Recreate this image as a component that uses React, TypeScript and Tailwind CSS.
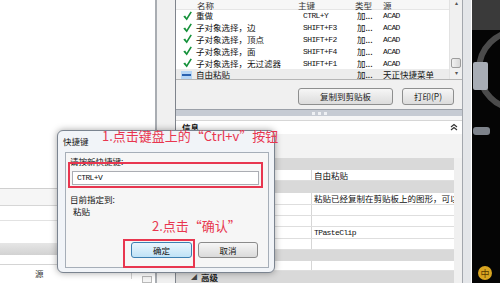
import React from "react"

const cjk = "font-['Noto_Sans_CJK_SC',sans-serif]"
const mono = "font-['Liberation_Mono',monospace] text-[8px] tracking-[-0.6px]"

const shortcuts = [
  { name: "重做", key: "CTRL+Y", type: "加...", src: "ACAD", icon: "check" },
  { name: "子对象选择，边", key: "SHIFT+F3", type: "加...", src: "ACAD", icon: "check" },
  { name: "子对象选择，顶点", key: "SHIFT+F2", type: "加...", src: "ACAD", icon: "check" },
  { name: "子对象选择，面", key: "SHIFT+F4", type: "加...", src: "ACAD", icon: "check" },
  { name: "子对象选择，无过滤器", key: "SHIFT+F1", type: "加...", src: "ACAD", icon: "check" },
  { name: "自由粘贴", key: "", type: "加...", src: "天正快捷菜单", icon: "minus" },
]

// info table rows: kind "cat" = gray category band
const infoRows = [
  { kind: "cat", h: "h-[12px]", value: "" },
  { kind: "row", h: "h-[11px]", value: "自由粘贴" },
  { kind: "cat", h: "h-[12px]", value: "" },
  { kind: "row", h: "h-[12px]", value: "粘贴已经复制在剪贴板上的图形，可以让用户自由选择粘贴方式" },
  { kind: "row", h: "h-[11px]", value: "" },
  { kind: "row", h: "h-[11px]", value: "" },
  { kind: "mono", h: "h-[12px]", value: "TPasteClip" },
  { kind: "row", h: "h-[11px]", value: "" },
  { kind: "cat", h: "h-[11px]", value: "" },
  { kind: "row", h: "h-[10px]", value: "" },
]

function CheckIcon() {
  return (
    <svg width="9" height="10" viewBox="0 0 9 10">
      <path d="M0.3 5.6 L2.1 4.4 L3.6 6.7 L7.5 0.4 L8.9 1.3 L3.8 9.6 Z" fill="#15913a" />
    </svg>
  )
}

function MinusIcon() {
  return (
    <div className="flex h-[8px] w-[11px] items-center justify-center bg-[#b6d5f4]">
      <div className="h-[2px] w-[9px] bg-[#2b62b0]" />
    </div>
  )
}

function WinButton({ label, className }: { label: string; className: string }) {
  return (
    <div
      className={`flex items-center justify-center rounded-[3px] border border-[#8e8f8f] bg-gradient-to-b from-[#f6f6f6] to-[#dcdcdc] text-[8.5px] text-[#222] ${cjk} ${className}`}
    >
      {label}
    </div>
  )
}

function LeftPanel() {
  return (
    <div className={`flex w-[155px] shrink-0 flex-col bg-white text-[8.5px] ${cjk}`}>
      <div className="h-[188px]" />
      <div className="h-[17px] border-t border-[#cfcfcf] bg-[#f6f6f6]" />
      <div className="h-[15px] border-t border-[#d6d6d6]" />
      <div className="h-[23px] border-t border-[#e2e2e2]" />
      <div className="h-[12px] bg-gradient-to-b from-[#e6e6e6] to-[#d2d2d2]" />
      <div className="h-[10px] border-b border-[#d4d4d4]" />
      <div className="flex h-[18px] items-start">
        <div className="w-[132px] border-r border-[#d0d0d0] pl-[35px] pt-[2px] leading-[12px] text-[#333]">源</div>
        <div className="ml-[10px] mt-[11px] h-[7px] w-[10px] border border-[#b9b9b9] bg-[#f4f4f4]" />
      </div>
    </div>
  )
}

function ShortcutList() {
  return (
    <div className="flex h-[80px] border-b border-[#b5b5b5]">
      <div className={`w-[273px] overflow-hidden bg-white text-[8.5px] text-[#111] ${cjk}`}>
        <div className="flex h-[10px] items-center border-b border-[#e6e6e6] bg-[#f7f7f7] leading-[10px] text-[#333]">
          <div className="w-[120px] pl-[21px]">名称</div>
          <div className="w-[57px] pl-[2px]">主键</div>
          <div className="w-[28px] pl-[2px]">类型</div>
          <div className="pl-[2px]">源</div>
        </div>
        {shortcuts.map((r) => (
          <div
            key={r.name}
            className={`flex h-[11.8px] items-center whitespace-nowrap leading-[11px] ${r.icon === "minus" ? "bg-[#ececec]" : ""}`}
          >
            <div className={`flex w-[20px] ${r.icon === "minus" ? "pl-[5px]" : "pl-[7px]"}`}>
              {r.icon === "check" ? <CheckIcon /> : <MinusIcon />}
            </div>
            <div className="w-[100px]">{r.name}</div>
            <div className={`w-[57px] pl-[7px] ${mono}`}>{r.key}</div>
            <div className="w-[28px] pl-[4px]">{r.type}</div>
            <div className={r.src === "ACAD" ? `pl-[2px] ${mono}` : "pl-[2px]"}>{r.src}</div>
          </div>
        ))}
      </div>
      {/* scrollbar */}
      <div className="relative w-[13px] border-l border-[#e2e2e2] bg-[#f0f0f0]">
        <div className="pt-[0px] text-center text-[6px] leading-[6px] text-[#555]">▴</div>
        <div className="absolute left-[1px] top-[58px] h-[10px] w-[10px] rounded-[2px] border border-[#9d9d9d] bg-gradient-to-r from-[#f2f2f2] to-[#d8d8d8]" />
        <div className="absolute bottom-[3px] left-0 w-full text-center text-[6px] leading-[6px] text-[#555]">▾</div>
      </div>
    </div>
  )
}

function InfoTable() {
  return (
    <div className="flex flex-1">
      <div className={`w-[278px] overflow-hidden bg-white text-[8.5px] text-[#111] ${cjk}`}>
        {infoRows.map((r, i) =>
          r.kind === "cat" ? (
            <div key={i} className={`${r.h} bg-[#d9d9d9]`} />
          ) : (
            <div key={i} className={`flex ${r.h} border-b border-[#dedede]`}>
              <div className="w-[136px] border-r border-[#d6d6d6]" />
              <div
                className={`flex-1 overflow-hidden whitespace-nowrap pl-[2px] leading-[11px] ${r.kind === "mono" ? "font-['Liberation_Mono',monospace] text-[8px] tracking-[-0.6px]" : ""}`}
              >
                {r.value}
              </div>
            </div>
          )
        )}
        <div className="flex h-[12px] items-center bg-[#d9d9d9] pl-[15px] leading-[10px]">
          <span className="mr-[4px] text-[6px] text-[#444]">◢</span>
          <span className="font-bold text-[#222]">高级</span>
        </div>
      </div>
      <div className="flex-1 bg-[#f0f0f0]" />
    </div>
  )
}

function RightPanel() {
  return (
    <div className="flex w-[287px] shrink-0 flex-col border-l border-[#7f848c] bg-[#f0f0f0]">
      <ShortcutList />
      <div className="flex h-[30px] justify-end gap-[9px] pr-[8px] pt-[8px]">
        <WinButton label="复制到剪贴板" className="h-[17px] w-[95px]" />
        <WinButton label="打印(P)" className="h-[17px] w-[52px]" />
      </div>
      <div className="flex h-[7px] items-center justify-center gap-[3px] border-t border-[#9ba0a8] bg-[#c6cbd3]">
        <div className="h-[3px] w-[3px] bg-[#eef0f3]" />
        <div className="h-[3px] w-[3px] bg-[#eef0f3]" />
        <div className="h-[3px] w-[3px] bg-[#eef0f3]" />
      </div>
      <div className="h-[5px] border-b border-[#d6d6d6] bg-[#f6f6f6]" />
      <div className={`flex h-[13px] items-center justify-between bg-white pl-[6px] pr-[4px] text-[8.5px] font-bold leading-[10px] text-[#111] ${cjk}`}>
        <span>信息</span>
        <svg width="8" height="8" viewBox="0 0 8 8">
          <path d="M1 4 L4 1.5 L7 4 M1 7 L4 4.5 L7 7" stroke="#333" strokeWidth="1.2" fill="none" />
        </svg>
      </div>
      <div className="h-[25px] bg-[#f3f3f3]" />
      <InfoTable />
    </div>
  )
}

function DarkArea() {
  return (
    <div className="flex-1 bg-black">
      <svg width="28" height="283" viewBox="0 0 28 283">
        <rect x="0" y="0" width="28" height="30" fill="#3a3a3a" />
        <rect x="0" y="30" width="28" height="253" fill="#050505" />
        <circle cx="46" cy="70" r="39" stroke="#4b4b4b" strokeWidth="6" fill="none" />
        <rect x="1" y="62" width="15" height="28" rx="2" fill="#a8adb5" />
        <rect x="1" y="127" width="17" height="8" rx="3" fill="#7e838b" />
        <circle cx="13" cy="273" r="7" fill="#d8a521" />
        <text x="13" y="276.5" fontSize="9" textAnchor="middle" fill="#5a3a00" fontFamily="Noto Sans CJK SC, sans-serif">中</text>
        <circle cx="13" cy="290" r="7" fill="#d8a521" />
      </svg>
    </div>
  )
}

function ShortcutDialog() {
  return (
    <div className="absolute left-[57px] top-[130px] flex h-[143px] w-[218px] flex-col rounded-[6px] border border-[#7b8490] bg-[#f1f4f8] shadow-[0_0_7px_rgba(0,0,0,0.35)]">
      <div className={`h-[21px] pl-[5px] pt-[4px] text-[8.5px] leading-[12px] text-[#111] ${cjk}`}>快捷键</div>
      <div className={`mb-[4px] ml-[7px] mr-[5px] flex flex-1 flex-col border border-[#a6aeb8] bg-[#f6f6f6] text-[8.5px] text-[#111] ${cjk}`}>
        <div className="pl-[4px] pt-[2px] leading-[12px]">请按新快捷键:</div>
        <div className="ml-[6px] mr-[9px] mt-[4px] flex h-[14px] items-center border border-[#abadb3] bg-white pl-[4px]">
          <span className={mono}>CTRL+V</span>
        </div>
        <div className="mt-[8px] pl-[4px] leading-[12px]">目前指定到:</div>
        <div className="pl-[7px] leading-[12px]">粘贴</div>
        <div className="mr-[10px] mt-[25px] flex justify-end gap-[6px]">
          <div className="flex h-[16px] w-[61px] items-center justify-center rounded-[3px] border border-[#3c7fb1] bg-gradient-to-b from-[#eaf6fd] to-[#bfe2f6]">
            确定
          </div>
          <div className="flex h-[16px] w-[60px] items-center justify-center rounded-[3px] border border-[#8b8b8b] bg-gradient-to-b from-[#f6f6f6] to-[#dadada]">
            取消
          </div>
        </div>
      </div>
    </div>
  )
}

export default function App() {
  return (
    <div className="relative flex h-[283px] w-[500px] overflow-hidden bg-white">
      <LeftPanel />
      <div className="w-[2px] shrink-0 bg-[#a9adb2]" />
      <div className="w-[18px] shrink-0 bg-[#f0f0f0]" />
      <RightPanel />
      <div className="w-[10px] shrink-0 border-l border-r border-[#a3a7ad] border-r-white bg-[#e4e6e9]" />
      <DarkArea />

      <ShortcutDialog />

      {/* annotations */}
      <div className="absolute left-[68px] top-[162px] h-[26px] w-[195px] border-2 border-[#e8364f]" />
      <div className="absolute left-[123px] top-[239px] h-[29px] w-[72px] border-2 border-[#e8364f]" />
      <div className={`absolute left-[102px] top-[128px] whitespace-nowrap text-[13px] leading-[16px] text-[#e8364f] ${cjk}`}>
        1.点击键盘上的“Ctrl+v”按钮
      </div>
      <div className={`absolute left-[152px] top-[218px] whitespace-nowrap text-[13px] leading-[16px] text-[#e8364f] ${cjk}`}>
        2.点击“确认”
      </div>
    </div>
  )
}
